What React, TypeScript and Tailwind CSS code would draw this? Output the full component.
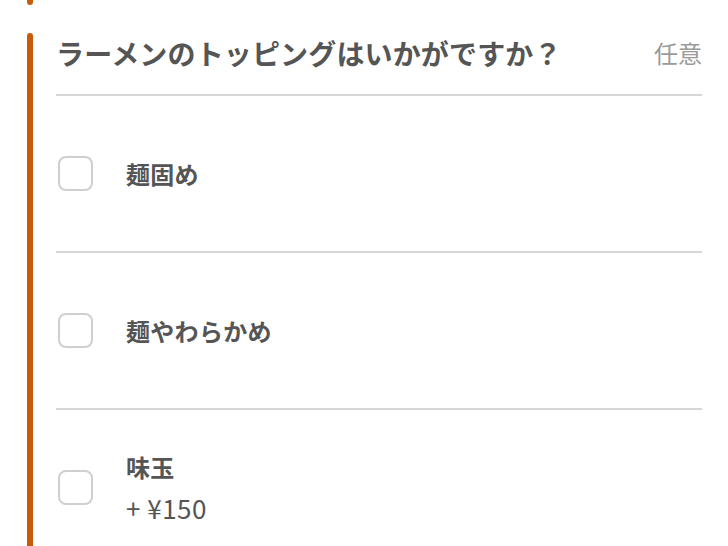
import React from 'react';

const options = [
    { id: 'katame', label: '麺固め' },
    { id: 'yawaraka', label: '麺やわらかめ' },
    { id: 'ajitama', label: '味玉', price: '+ ¥150' },
];

function Checkbox() {
    return <span className="block h-[35px] w-[35px] shrink-0 rounded-[8px] border-2 border-[#cfcfcf] bg-white" />;
}

export default function App() {
    return (
        <div
            className="min-h-screen bg-white text-[#555]"
            style={{ fontFamily: '"Noto Sans CJK JP", "Noto Sans", sans-serif' }}
        >
            {/* end of previous section */}
            <div className="ml-[27px] h-[5px] w-[6px] rounded-b-full bg-[#c85a0c]" />

            <section className="mt-[28px] flex">
                <div className="ml-[27px] w-[6px] shrink-0 rounded-t-full bg-[#c85a0c]" />
                <div className="ml-[23px] mr-[26px] flex-1">
                    <div className="flex items-center justify-between border-b-2 border-[#d6d6d6] pb-[21px]">
                        <h2 className="text-[28px] font-bold leading-[40px] tracking-[0.15px]">
                            ラーメンのトッピングはいかがですか？
                        </h2>
                        <span className="text-[24px] leading-[40px] text-[#9a9a9a]">任意</span>
                    </div>

                    {options.map((opt) => (
                        <label
                            key={opt.id}
                            className="flex h-[157px] items-center border-b-2 border-[#d6d6d6] pl-[2px]"
                        >
                            <Checkbox />
                            <div className="ml-[33px] flex flex-col">
                                <span className="text-[24px] font-bold leading-[34px] tracking-[0.3px]">{opt.label}</span>
                                {opt.price && (
                                    <span className="mt-[7px] text-[26px] leading-[34px] tracking-[0.5px]">{opt.price}</span>
                                )}
                            </div>
                        </label>
                    ))}
                </div>
            </section>
        </div>
    );
}
